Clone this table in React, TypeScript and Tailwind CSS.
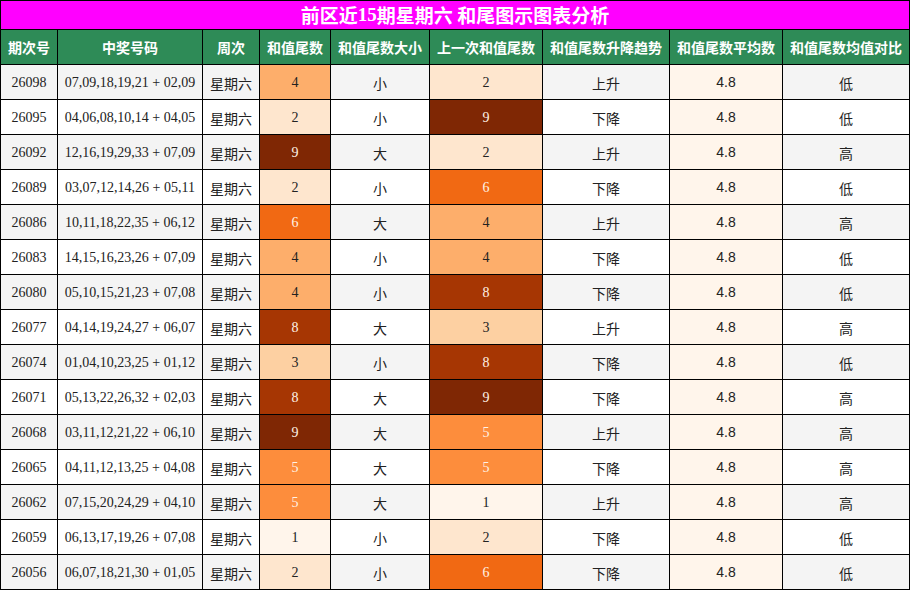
import React from "react";

const rows: [string, string, number, string, number, string, string][] = [
  ["26098", "07,09,18,19,21 + 02,09", 4, "小", 2, "上升", "低"],
  ["26095", "04,06,08,10,14 + 04,05", 2, "小", 9, "下降", "低"],
  ["26092", "12,16,19,29,33 + 07,09", 9, "大", 2, "上升", "高"],
  ["26089", "03,07,12,14,26 + 05,11", 2, "小", 6, "下降", "低"],
  ["26086", "10,11,18,22,35 + 06,12", 6, "大", 4, "上升", "高"],
  ["26083", "14,15,16,23,26 + 07,09", 4, "小", 4, "下降", "低"],
  ["26080", "05,10,15,21,23 + 07,08", 4, "小", 8, "下降", "低"],
  ["26077", "04,14,19,24,27 + 06,07", 8, "大", 3, "上升", "高"],
  ["26074", "01,04,10,23,25 + 01,12", 3, "小", 8, "下降", "低"],
  ["26071", "05,13,22,26,32 + 02,03", 8, "大", 9, "下降", "高"],
  ["26068", "03,11,12,21,22 + 06,10", 9, "大", 5, "上升", "高"],
  ["26065", "04,11,12,13,25 + 04,08", 5, "大", 5, "下降", "高"],
  ["26062", "07,15,20,24,29 + 04,10", 5, "大", 1, "上升", "高"],
  ["26059", "06,13,17,19,26 + 07,08", 1, "小", 2, "下降", "低"],
  ["26056", "06,07,18,21,30 + 01,05", 2, "小", 6, "下降", "低"],
];

const headers = [
  "期次号",
  "中奖号码",
  "周次",
  "和值尾数",
  "和值尾数大小",
  "上一次和值尾数",
  "和值尾数升降趋势",
  "和值尾数平均数",
  "和值尾数均值对比",
];

// Oranges scale, one class string per tail digit
const heat: Record<number, string> = {
  0: "bg-[#fff5eb]",
  1: "bg-[#fff5eb]",
  2: "bg-[#fee6ce]",
  3: "bg-[#fdd0a2]",
  4: "bg-[#fdae6b]",
  5: "bg-[#fd8d3c]",
  6: "bg-[#f16913]",
  7: "bg-[#d94801]",
  8: "bg-[#a63603]",
  9: "bg-[#7f2704]",
};

const serif = "font-['Liberation_Serif','Noto_Sans_CJK_SC',serif] text-[14px]";
const cjk = "font-['Noto_Sans_CJK_SC',sans-serif] text-[14px] pt-[3px]";
const sans = "font-['Liberation_Sans','Noto_Sans_CJK_SC',sans-serif] text-[14px]";

function Cell({ className, children }: { className: string; children: React.ReactNode }) {
  return (
    <div className={`flex items-center justify-center whitespace-nowrap text-[#222] ${className}`}>
      {children}
    </div>
  );
}

function Heat({ v }: { v: number }) {
  return (
    <Cell className={`${heat[v]} ${serif}`}>
      <span className={v >= 5 ? "text-[#fff3e6]" : "text-[#222]"}>{v}</span>
    </Cell>
  );
}

export default function App() {
  return (
    <div className="w-[910px] h-[590px] bg-white">
      <div className="grid grid-cols-[56px_144px_56px_70px_98px_112px_126px_112px_126px] grid-rows-[28px_34px_repeat(15,34px)] gap-px p-px bg-black w-[910px]">
        {/* Title */}
        <div className="col-span-9 bg-[#ff00ff] flex items-center justify-center text-white font-bold text-[19px] font-['Liberation_Serif','Noto_Sans_CJK_SC',serif]">
          <span className="font-['Noto_Sans_CJK_SC',sans-serif]">前区近</span>
          <span>15</span>
          <span className="font-['Noto_Sans_CJK_SC',sans-serif]">期星期六 和尾图示图表分析</span>
        </div>

        {/* Header */}
        {headers.map((h) => (
          <div
            key={h}
            className="bg-[#2e8b57] flex items-center justify-center text-white font-bold text-[14px] font-['Noto_Sans_CJK_SC',sans-serif] whitespace-nowrap"
          >
            {h}
          </div>
        ))}

        {/* Rows */}
        {rows.map((r, i) => {
          const base = i % 2 === 0 ? "bg-[#f4f4f4]" : "bg-white";
          return (
            <React.Fragment key={r[0]}>
              <Cell className={`${base} ${serif}`}>{r[0]}</Cell>
              <Cell className={`${base} ${serif}`}>{r[1]}</Cell>
              <Cell className={`${base} ${cjk}`}>星期六</Cell>
              <Heat v={r[2]} />
              <Cell className={`${base} ${cjk}`}>{r[3]}</Cell>
              <Heat v={r[4]} />
              <Cell className={`${base} ${cjk}`}>{r[5]}</Cell>
              <Cell className={`bg-[#fff5eb] ${sans}`}>4.8</Cell>
              <Cell className={`${base} ${cjk}`}>{r[6]}</Cell>
            </React.Fragment>
          );
        })}
      </div>
    </div>
  );
}
